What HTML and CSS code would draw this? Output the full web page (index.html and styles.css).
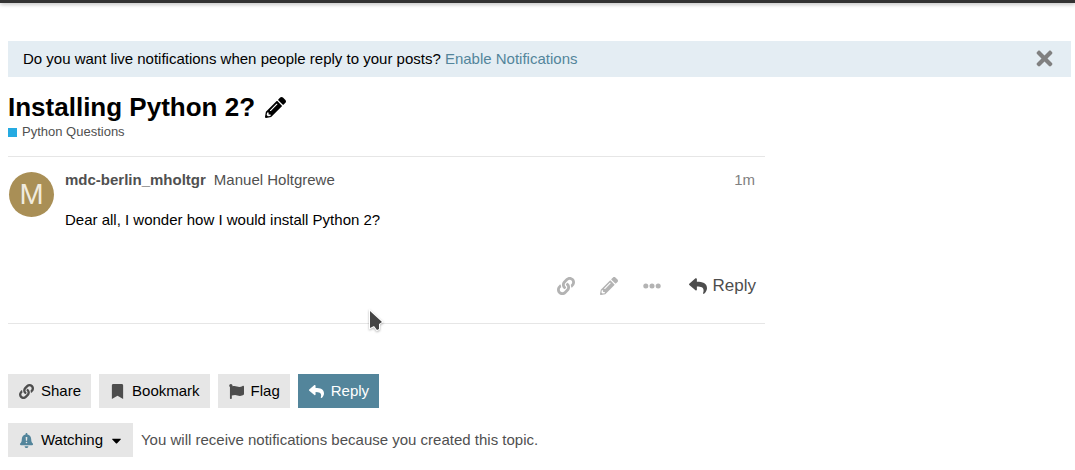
FILE: index.html
```html
<!DOCTYPE html>
<html lang="en">
<head>
<meta charset="utf-8">
<title>Installing Python 2?</title>
<link rel="stylesheet" href="styles.css">
</head>
<body>
<svg class="sprite" aria-hidden="true">
  <symbol id="link" viewBox="0 0 512 512"><path d="M326.612 185.391c59.747 59.809 58.927 155.698.36 214.59-.11.12-.24.25-.36.37l-67.2 67.2c-59.27 59.27-155.699 59.262-214.96 0-59.27-59.26-59.27-155.7 0-214.96l37.106-37.106c9.84-9.84 26.786-3.3 27.294 10.606.648 17.722 3.826 35.527 9.69 52.721 1.986 5.822.567 12.262-3.783 16.612l-13.087 13.087c-28.026 28.026-28.905 73.66-1.155 101.96 28.024 28.579 74.086 28.749 102.325.51l67.2-67.19c28.191-28.191 28.073-73.757 0-101.83-3.701-3.694-7.429-6.564-10.341-8.569a16.037 16.037 0 0 1-6.947-12.606c-.396-10.567 3.348-21.456 11.698-29.806l21.054-21.055c5.521-5.521 14.182-6.199 20.584-1.731a152.482 152.482 0 0 1 20.522 17.197zM467.547 44.449c-59.261-59.262-155.69-59.27-214.96 0l-67.2 67.2c-.12.12-.25.25-.36.37-58.566 58.892-59.387 154.781.36 214.59a152.454 152.454 0 0 0 20.521 17.196c6.402 4.468 15.064 3.789 20.584-1.731l21.054-21.055c8.35-8.35 12.094-19.239 11.698-29.806a16.037 16.037 0 0 0-6.947-12.606c-2.912-2.005-6.64-4.875-10.341-8.569-28.073-28.073-28.191-73.639 0-101.83l67.2-67.19c28.239-28.239 74.3-28.069 102.325.51 27.75 28.3 26.872 73.934-1.155 101.96l-13.087 13.087c-4.35 4.35-5.769 10.79-3.783 16.612 5.864 17.194 9.042 34.999 9.69 52.721.509 13.906 17.454 20.446 27.294 10.606l37.106-37.106c59.271-59.259 59.271-155.699.001-214.959z"/></symbol>
  <symbol id="pencil" viewBox="0 0 512 512"><path d="M497.9 142.1l-46.1 46.1c-4.7 4.7-12.3 4.7-17 0l-111-111c-4.7-4.7-4.7-12.3 0-17l46.1-46.1c18.7-18.7 49.1-18.7 67.9 0l60.1 60.1c18.8 18.7 18.8 49.1 0 67.9zM284.2 99.8L21.6 362.4.4 483.9c-2.9 16.4 11.4 30.6 27.8 27.8l121.5-21.3 262.6-262.6c4.7-4.7 4.7-12.3 0-17l-111-111c-4.8-4.7-12.4-4.7-17.1 0zM124.1 339.9c-5.5-5.5-5.5-14.3 0-19.8l154-154c5.5-5.5 14.3-5.5 19.8 0s5.5 14.3 0 19.8l-154 154c-5.5 5.5-14.3 5.5-19.8 0zM88 424h48v36.3l-64.5 11.3-31.1-31.1L51.7 376H88v48z"/></symbol>
  <symbol id="dots" viewBox="0 0 512 512"><circle cx="80" cy="256" r="72"/><circle cx="256" cy="256" r="72"/><circle cx="432" cy="256" r="72"/></symbol>
  <symbol id="reply" viewBox="0 0 512 512"><path d="M8.309 189.836L184.313 37.851C199.719 24.546 224 35.347 224 56.015v80.053c160.629 1.839 288 34.032 288 186.258 0 61.441-39.581 122.309-83.333 154.132-13.653 9.931-33.111-2.533-28.077-18.631 45.344-145.012-21.507-183.51-176.59-185.742V360c0 20.7-24.3 31.453-39.687 18.164l-176.004-152c-11.071-9.562-11.086-26.753 0-36.328z"/></symbol>
  <symbol id="bookmark" viewBox="0 0 384 512"><path d="M0 512V48C0 21.49 21.49 0 48 0h288c26.51 0 48 21.49 48 48v464L192 400 0 512z"/></symbol>
  <symbol id="flag" viewBox="0 0 512 512"><path d="M349.565 98.783C295.978 98.783 251.721 64 184.348 64c-24.955 0-47.309 4.384-68.045 12.013a55.947 55.947 0 0 0 3.586-23.562C118.117 24.015 94.806 1.206 66.338.048 34.345-1.254 8 24.296 8 56c0 19.026 9.497 35.825 24 45.945V488c0 13.255 10.745 24 24 24h16c13.255 0 24-10.745 24-24v-94.4c28.311-12.064 63.582-22.122 114.435-22.122 53.588 0 97.844 34.783 165.217 34.783 48.169 0 86.667-16.294 122.505-40.858C506.84 359.452 512 349.571 512 339.045v-243.1c0-23.393-24.269-38.87-45.485-29.016-34.338 15.948-76.454 31.854-116.95 31.854z"/></symbol>
  <symbol id="times" viewBox="0 0 352 512"><path d="M242.72 256l100.07-100.07c12.28-12.28 12.28-32.19 0-44.48l-22.24-22.24c-12.28-12.28-32.19-12.28-44.48 0L176 189.28 75.93 89.21c-12.28-12.28-32.19-12.28-44.48 0L9.21 111.45c-12.28 12.28-12.28 32.19 0 44.48L109.28 256 9.21 356.07c-12.28 12.28-12.28 32.19 0 44.48l22.24 22.24c12.28 12.28 32.2 12.28 44.48 0L176 322.72l100.07 100.07c12.28 12.28 32.2 12.28 44.48 0l22.24-22.24c12.28-12.28 12.28-32.19 0-44.48L242.72 256z"/></symbol>
  <symbol id="bell" viewBox="0 0 448 512"><path fill-rule="evenodd" d="M224 512c35.32 0 63.97-28.65 63.97-64H160.03c0 35.35 28.65 64 63.97 64zm215.39-149.71c-19.32-20.76-55.47-51.99-55.47-154.29 0-77.7-54.48-139.9-127.94-155.16V32c0-17.67-14.32-32-31.98-32s-31.98 14.33-31.98 32v20.84C118.56 68.1 64.08 130.3 64.08 208c0 102.3-36.15 133.53-55.47 154.29-6 6.45-8.66 14.16-8.61 21.71.11 16.4 12.98 32 32.1 32h383.8c19.12 0 32-15.6 32.1-32 .05-7.55-2.61-15.27-8.61-21.71zM196 136h56l-8 126h-40zM224 298a27 27 0 1 0 0 54a27 27 0 1 0 0-54z"/></symbol>
  <symbol id="caret" viewBox="0 0 320 512"><path d="M31.3 192h257.3c17.8 0 26.7 21.5 14.1 34.1L174.1 354.8c-7.8 7.8-20.5 7.8-28.3 0L17.2 226.1C4.6 213.5 13.5 192 31.3 192z"/></symbol>
</svg>
<header class="topbar"></header>
<main class="page">
  <div class="notice">
    <p class="notice-text">Do you want live notifications when people reply to your posts? <a class="link" href="#enable">Enable Notifications</a></p>
    <button class="plain close" type="button" aria-label="Close"><svg class="icon icon-close"><use href="#times"/></svg></button>
  </div>
  <div class="topic-title">
    <h1 class="title">Installing Python 2?</h1>
    <button class="plain title-edit" type="button" aria-label="Edit title"><svg class="icon icon-title"><use href="#pencil"/></svg></button>
  </div>
  <a class="category" href="#category"><span class="category-box"></span>Python Questions</a>
  <article class="post">
    <div class="avatar">M</div>
    <div class="post-body">
      <div class="post-meta">
        <a class="username" href="#user">mdc-berlin_mholtgr</a>
        <a class="fullname" href="#user">Manuel Holtgrewe</a>
        <a class="post-date" href="#post">1m</a>
      </div>
      <p class="post-text">Dear all, I wonder how I would install Python 2?</p>
      <div class="post-actions">
        <button class="plain action" type="button" aria-label="Link"><svg class="icon icon-action"><use href="#link"/></svg></button>
        <button class="plain action" type="button" aria-label="Edit"><svg class="icon icon-action"><use href="#pencil"/></svg></button>
        <button class="plain action" type="button" aria-label="More"><svg class="icon icon-action"><use href="#dots"/></svg></button>
        <button class="plain action action-reply" type="button"><svg class="icon icon-action"><use href="#reply"/></svg>Reply</button>
      </div>
    </div>
  </article>
  <div class="footer-buttons">
    <button class="btn" type="button"><svg class="icon"><use href="#link"/></svg>Share</button>
    <button class="btn" type="button"><svg class="icon"><use href="#bookmark"/></svg>Bookmark</button>
    <button class="btn" type="button"><svg class="icon"><use href="#flag"/></svg>Flag</button>
    <button class="btn btn-primary" type="button"><svg class="icon"><use href="#reply"/></svg>Reply</button>
  </div>
  <div class="watch">
    <button class="btn" type="button" aria-haspopup="true"><svg class="icon icon-bell"><use href="#bell"/></svg>Watching<svg class="icon icon-caret"><use href="#caret"/></svg></button>
    <span class="watch-text">You will receive notifications because you created this topic.</span>
  </div>
</main>
<svg class="cursor" viewBox="0 0 16 24" aria-hidden="true"><path d="M2 2V19L6 17L9 21L11 20V15L14 13Z"/></svg>
</body>
</html>
```
FILE: styles.css
```css
* { box-sizing: border-box; }
body {
  margin: 0;
  background: #fff;
  color: #000;
  font-family: "Liberation Sans", Arial, sans-serif;
  font-size: 15px;
  line-height: 20px;
}
a { color: inherit; text-decoration: none; }
p, h1 { margin: 0; }
.sprite { display: none; }
.icon { width: 15px; height: 15px; flex: none; fill: currentColor; }
.plain {
  display: flex;
  align-items: center;
  padding: 0;
  border: 0;
  background: none;
  color: inherit;
  font: inherit;
  cursor: pointer;
}
.topbar {
  height: 3px;
  background: #333;
  box-shadow: 0 1px 4px rgba(0, 0, 0, 0.35);
}
.page { padding: 38px 4px 12px 8px; }
.notice {
  display: flex;
  align-items: center;
  justify-content: space-between;
  padding: 6px 15px 7px;
  background: #e4edf3;
}
.link { color: #53859b; }
.close { color: #808080; }
.icon-close { width: 23px; height: 23px; }
.topic-title {
  display: flex;
  align-items: center;
  gap: 10px;
  margin-top: 15px;
}
.title { font-size: 26px; line-height: 30px; }
.icon-title { width: 21px; height: 21px; }
.category {
  display: flex;
  align-items: center;
  gap: 5px;
  color: #505050;
  font-size: 13px;
}
.category-box { width: 9px; height: 9px; background: #25aae1; }
.post {
  display: flex;
  gap: 11px;
  max-width: 757px;
  margin-top: 14px;
  padding: 15px 9px 27px 1px;
  border-top: 1px solid #e6e6e6;
  border-bottom: 1px solid #e6e6e6;
}
.avatar {
  width: 45px;
  height: 45px;
  flex: none;
  border-radius: 50%;
  background: #a98f56;
  color: #f0ebdf;
  font-size: 29px;
  line-height: 45px;
  text-align: center;
}
.post-body { flex: 1; }
.post-meta { display: flex; gap: 8px; color: #505050; padding-right: 1px; margin-top: -2px; }
.username { font-weight: bold; }
.post-date { margin-left: auto; color: #808080; }
.post-text { margin-top: 20px; }
.post-actions {
  display: flex;
  justify-content: flex-end;
  gap: 25px;
  margin-top: 46px;
  font-size: 17px;
}
.action { color: #b3b3b3; }
.action-reply { gap: 6px; margin-left: 3px; color: #4d4d4d; }
.icon-action { width: 18px; height: 18px; }
.footer-buttons { display: flex; gap: 8px; margin-top: 50px; }
.btn {
  display: flex;
  align-items: center;
  gap: 7px;
  height: 34px;
  padding: 0 10px 0 11px;
  border: 0;
  background: #e6e6e6;
  color: #000;
  font: inherit;
  cursor: pointer;
}
.btn .icon { color: #4d4d4d; }
.btn-primary { background: #53859b; color: #fff; }
.btn-primary .icon { color: #fff; }
.btn .icon-bell { color: #53859b; }
.btn .icon-caret { width: 13px; color: #000; }
.watch { display: flex; align-items: center; gap: 8px; margin-top: 15px; }
.watch-text { color: #505050; }
.cursor {
  position: absolute;
  left: 368px;
  top: 309px;
  width: 16px;
  height: 24px;
  fill: #444;
  stroke: #fff;
  stroke-width: 2;
  paint-order: stroke;
  filter: drop-shadow(0 1px 1px rgba(0, 0, 0, 0.3));
}
```
